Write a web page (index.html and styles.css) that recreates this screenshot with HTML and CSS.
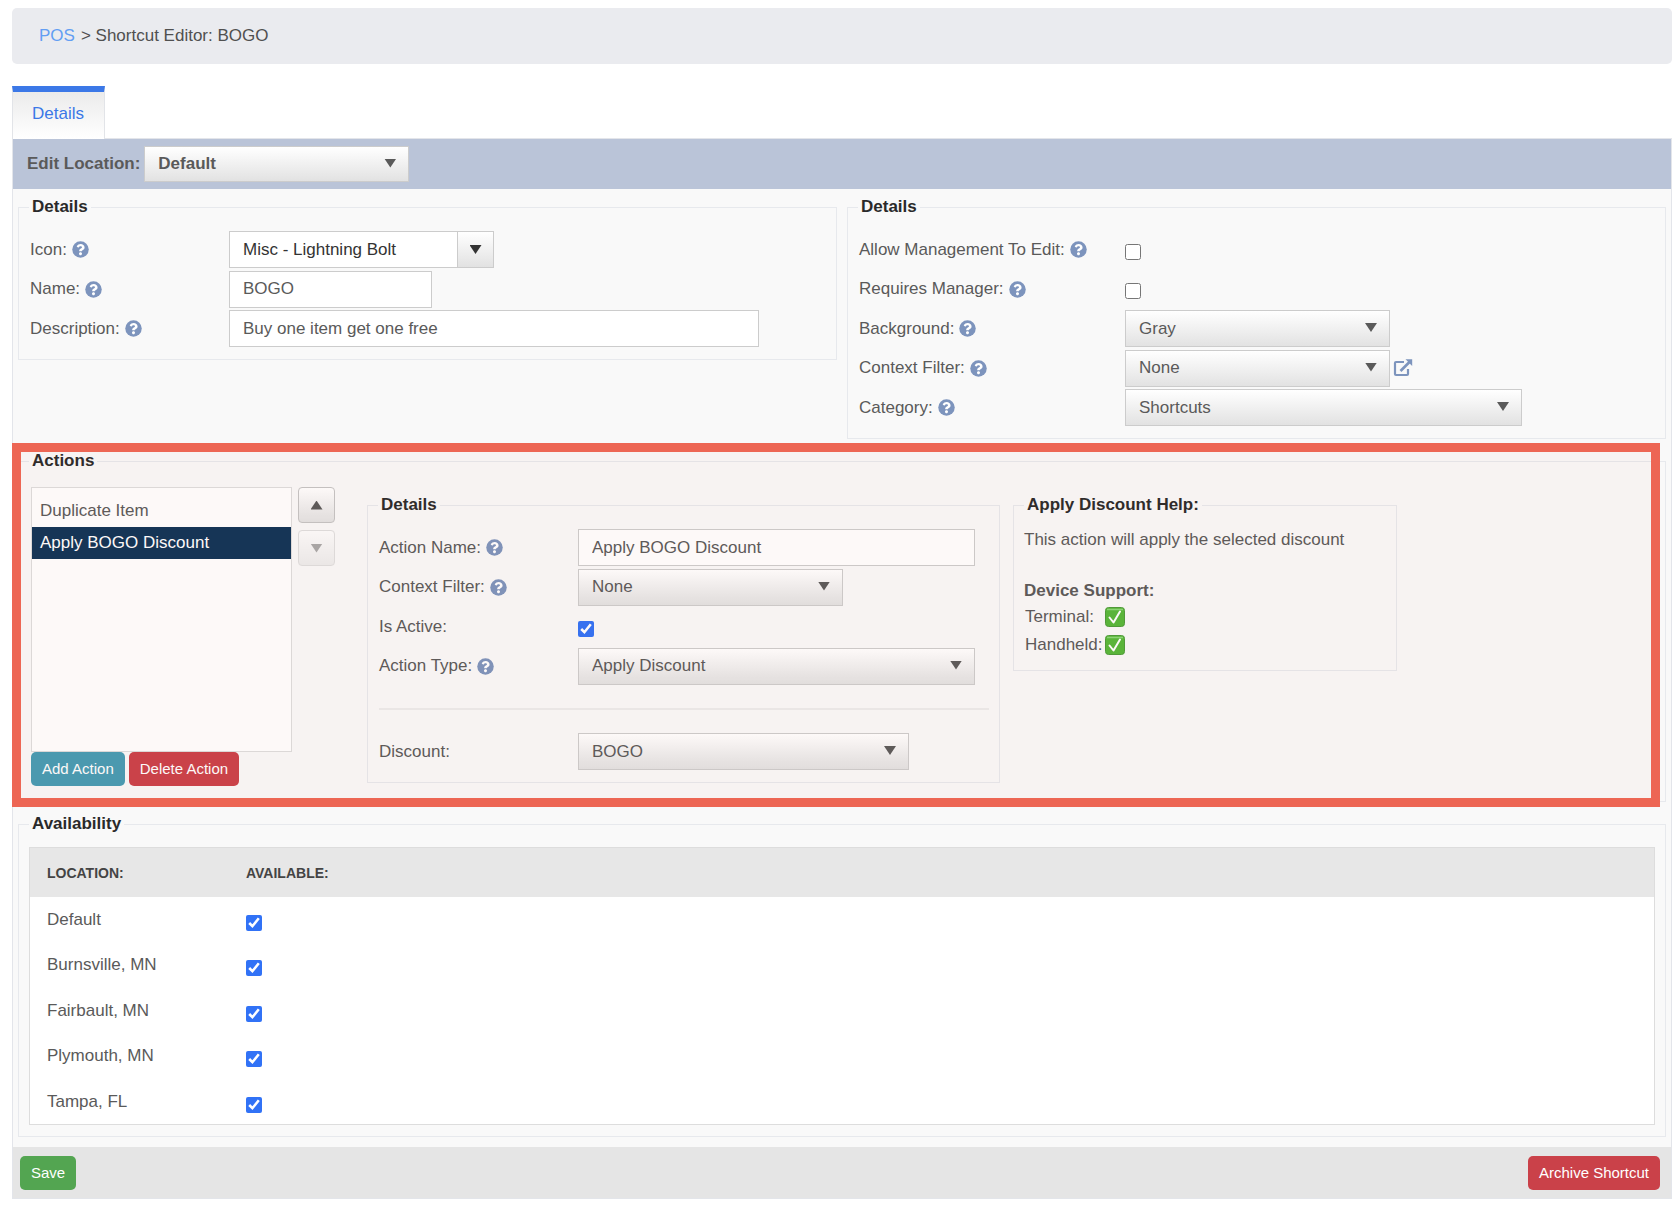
FILE: index.html
```html
<!DOCTYPE html>
<html lang="en">
<head>
  <meta charset="utf-8">
  <title>Shortcut Editor: BOGO</title>
  <meta name="viewport" content="width=device-width, initial-scale=1">
  <link rel="stylesheet" href="styles.css">
</head>
<body>
  <svg class="sprite" aria-hidden="true">
    <symbol id="help" viewBox="0 0 512 512">
      <circle cx="256" cy="256" r="248" fill="#7d94bd"/>
      <path fill="#fff" d="M262.655 90c-54.497 0-89.255 22.957-116.549 63.758-3.536 5.286-2.353 12.415 2.715 16.258l34.699 26.31c5.205 3.947 12.621 3.008 16.665-2.122 17.864-22.658 30.113-35.797 57.303-35.797 20.429 0 45.698 13.148 45.698 32.958 0 14.976-12.363 22.667-32.534 33.976C247.128 238.528 216 254.941 216 296v4c0 6.627 5.373 12 12 12h56c6.627 0 12-5.373 12-12v-1.333c0-28.462 83.186-29.647 83.186-106.667 0-58.002-60.165-102-116.531-102zM256 338c-25.365 0-46 20.635-46 46 0 25.364 20.635 46 46 46s46-20.636 46-46c0-25.364-20.635-46-46-46z"/>
    </symbol>
    <symbol id="external" viewBox="0 0 20 18">
      <path fill="none" stroke="#7d94bd" stroke-width="2.200" stroke-linejoin="round" d="M11 3H3Q2 3 2 4V15Q2 16 3 16H14Q15 16 15 15V10"/>
      <path fill="none" stroke="#7d94bd" stroke-width="2.600" d="M7.500 12L16.500 3"/>
      <path fill="#7d94bd" d="M12.500 0.300H19.200V7z"/>
    </symbol>
    <symbol id="supported" viewBox="0 0 20 20">
      <rect x=".5" y=".5" width="19" height="19" rx="3" fill="#56b83a" stroke="#4c9c3a"/>
      <path d="M2 2.500H18" stroke="#8ad877" stroke-width="1.500"/>
      <path fill="none" stroke="#fff" stroke-width="2" stroke-linejoin="round" stroke-linecap="round" d="M4.500 10.500L8.500 15.500L15 4.500"/>
    </symbol>
  </svg>

  <nav class="breadcrumb" aria-label="Breadcrumb"><a href="#pos">POS</a><span>&gt; Shortcut Editor: BOGO</span></nav>

  <nav class="tabs"><a class="tab" href="#details">Details</a></nav>

  <form class="panel" id="details">
    <div class="location-bar">
      <label for="edit-location">Edit Location:</label>
      <span class="select w-md"><select id="edit-location"><option>Default</option></select></span>
    </div>

    <div class="sections">
      <div class="columns">
        <fieldset>
          <legend>Details</legend>
          <div class="fields">
            <div class="label"><label for="icon">Icon:</label><svg class="help"><use href="#help"/></svg></div>
            <div class="combo w-md">
              <input id="icon" type="text" value="Misc - Lightning Bolt">
              <button type="button" aria-label="Choose icon"><span class="arrow"></span></button>
            </div>
            <div class="label"><label for="name">Name:</label><svg class="help"><use href="#help"/></svg></div>
            <input class="text w-sm" id="name" type="text" value="BOGO">
            <div class="label"><label for="description">Description:</label><svg class="help"><use href="#help"/></svg></div>
            <input class="text w-xl" id="description" type="text" value="Buy one item get one free">
          </div>
        </fieldset>

        <fieldset>
          <legend>Details</legend>
          <div class="fields wide-labels">
            <div class="label"><label for="allow-edit">Allow Management To Edit:</label><svg class="help"><use href="#help"/></svg></div>
            <input class="check" id="allow-edit" type="checkbox">
            <div class="label"><label for="requires-manager">Requires Manager:</label><svg class="help"><use href="#help"/></svg></div>
            <input class="check" id="requires-manager" type="checkbox">
            <div class="label"><label for="background">Background:</label><svg class="help"><use href="#help"/></svg></div>
            <span class="select w-md"><select id="background"><option>Gray</option></select></span>
            <div class="label"><label for="filter">Context Filter:</label><svg class="help"><use href="#help"/></svg></div>
            <div class="with-link">
              <span class="select w-md"><select id="filter"><option>None</option></select></span>
              <a href="#filters" aria-label="Open context filters"><svg class="external"><use href="#external"/></svg></a>
            </div>
            <div class="label"><label for="category">Category:</label><svg class="help"><use href="#help"/></svg></div>
            <span class="select w-lg"><select id="category"><option>Shortcuts</option></select></span>
          </div>
        </fieldset>
      </div>

      <div class="highlighted">
        <fieldset class="actions">
          <legend>Actions</legend>
          <div class="actions-row">
            <div class="action-list">
              <ul role="listbox" aria-label="Actions">
                <li role="option" aria-selected="false">Duplicate Item</li>
                <li role="option" aria-selected="true">Apply BOGO Discount</li>
              </ul>
              <div class="buttons">
                <button class="btn info" type="button">Add Action</button>
                <button class="btn danger" type="button">Delete Action</button>
              </div>
            </div>
            <div class="order">
              <button type="button" aria-label="Move up"><span class="arrow up"></span></button>
              <button type="button" aria-label="Move down" disabled><span class="arrow"></span></button>
            </div>

            <fieldset class="action-details">
              <legend>Details</legend>
              <div class="fields">
                <div class="label"><label for="action-name">Action Name:</label><svg class="help"><use href="#help"/></svg></div>
                <input class="text w-lg" id="action-name" type="text" value="Apply BOGO Discount">
                <div class="label"><label for="action-filter">Context Filter:</label><svg class="help"><use href="#help"/></svg></div>
                <span class="select w-md"><select id="action-filter"><option>None</option></select></span>
                <div class="label"><label for="is-active">Is Active:</label></div>
                <input class="check" id="is-active" type="checkbox" checked>
                <div class="label"><label for="action-type">Action Type:</label><svg class="help"><use href="#help"/></svg></div>
                <span class="select w-lg"><select id="action-type"><option>Apply Discount</option></select></span>
              </div>
              <hr>
              <div class="fields">
                <div class="label"><label for="discount">Discount:</label></div>
                <span class="select w-ml"><select id="discount"><option>BOGO</option></select></span>
              </div>
            </fieldset>

            <fieldset class="action-help">
              <legend>Apply Discount Help:</legend>
              <p>This action will apply the selected discount</p>
              <h3>Device Support:</h3>
              <dl>
                <dt>Terminal:</dt><dd><svg class="supported" role="img" aria-label="Supported"><use href="#supported"/></svg></dd>
                <dt>Handheld:</dt><dd><svg class="supported" role="img" aria-label="Supported"><use href="#supported"/></svg></dd>
              </dl>
            </fieldset>
          </div>
        </fieldset>
      </div>

      <fieldset>
        <legend>Availability</legend>
        <table>
          <thead>
            <tr><th scope="col">LOCATION:</th><th scope="col">AVAILABLE:</th></tr>
          </thead>
          <tbody>
            <tr><td><label for="at-default">Default</label></td><td><input class="check" id="at-default" type="checkbox" checked></td></tr>
            <tr><td><label for="at-burnsville">Burnsville, MN</label></td><td><input class="check" id="at-burnsville" type="checkbox" checked></td></tr>
            <tr><td><label for="at-fairbault">Fairbault, MN</label></td><td><input class="check" id="at-fairbault" type="checkbox" checked></td></tr>
            <tr><td><label for="at-plymouth">Plymouth, MN</label></td><td><input class="check" id="at-plymouth" type="checkbox" checked></td></tr>
            <tr><td><label for="at-tampa">Tampa, FL</label></td><td><input class="check" id="at-tampa" type="checkbox" checked></td></tr>
          </tbody>
        </table>
      </fieldset>
    </div>

    <footer>
      <button class="btn success" type="submit">Save</button>
      <button class="btn danger" type="button">Archive Shortcut</button>
    </footer>
  </form>
</body>
</html>
```

FILE: styles.css
```css
* { box-sizing: border-box; }

body {
  margin: 8px 8px 8px 12px;
  font: 17px/24px "Liberation Sans", Arial, sans-serif;
  color: #5a5a5a;
  background: #fff;
}

input, select, button { font: inherit; color: inherit; margin: 0; }

.sprite { display: none; }

.breadcrumb {
  display: flex;
  gap: 6px;
  padding: 16px 27px;
  border-radius: 5px;
  background: #eaebef;
  color: #505050;
}
.breadcrumb a { color: #629ef3; text-decoration: none; }

/* Tabs */
.tabs { display: flex; margin-top: 22px; }
.tab {
  position: relative;
  margin-bottom: -1px;
  padding: 10px 20px 13px 19px;
  border: 1px solid #e2e4e8;
  border-top: 6px solid #3b78e7;
  border-bottom: 0;
  background: linear-gradient(#ebebeb, #fff);
  color: #3b78e7;
  text-decoration: none;
}

.panel { border: 1px solid #e3e5ea; background: #f9f9f9; }

.location-bar {
  display: flex;
  align-items: center;
  gap: 4px;
  padding: 7px 14px;
  background: #bac4d8;
  font-weight: bold;
}

.sections {
  display: flex;
  flex-direction: column;
  gap: 10px;
  padding: 6px 5px 10px;
}
.columns {
  display: grid;
  grid-template-columns: 1fr 1fr;
  align-items: start;
  gap: 10px;
}

fieldset {
  min-width: 0;
  margin: 0;
  padding: 11px 10px;
  border: 1px solid #e7e9ed;
}
legend { padding: 0 3px; font-weight: bold; color: #2a2a2a; }

/* Label and control pairs */
.fields {
  display: grid;
  grid-template-columns: 199px 1fr;
  grid-auto-rows: 39px 40px;
  align-items: center;
  padding: 0 1px;
}
.wide-labels { grid-template-columns: 266px 1fr; }
.label { display: flex; align-items: center; gap: 5px; }
.help { width: 17px; height: 17px; }

.w-sm { width: 203px; }
.w-md { width: 265px; }
.w-ml { width: 331px; }
.w-lg { width: 397px; }
.w-xl { width: 530px; }

.text {
  height: 37px;
  padding: 0 13px;
  border: 1px solid #ccc;
  background: #fff;
}

.select { display: inline-grid; align-items: center; }
.select select {
  grid-area: 1 / 1;
  width: 100%;
  height: 37px;
  padding: 0 36px 0 13px;
  border: 1px solid #ccc;
  border-radius: 0;
  appearance: none;
  background: linear-gradient(#fff, #e2e2e2);
}
.location-bar select { height: 36px; font-weight: bold; }
.select::after {
  content: "";
  grid-area: 1 / 1;
  justify-self: end;
  width: 12px;
  height: 9px;
  margin: 0 13px 2px 0;
  background: #5a5a5a;
  clip-path: polygon(0 0, 100% 0, 50% 100%);
  pointer-events: none;
}

.arrow {
  width: 12px;
  height: 9px;
  background: #5a5a5a;
  clip-path: polygon(0 0, 100% 0, 50% 100%);
}
.arrow.up { clip-path: polygon(50% 0, 100% 100%, 0 100%); }

.combo { display: flex; height: 37px; border: 1px solid #ccc; background: #fff; color: #333; }
.combo input { flex: 1; min-width: 0; padding: 0 13px; border: 0; background: none; }
.combo button {
  display: flex;
  align-items: center;
  justify-content: center;
  width: 36px;
  padding: 0;
  border: 0;
  border-left: 1px solid #ccc;
  background: linear-gradient(#fff, #e2e2e2);
}
.combo .arrow { background: #333; }

.check { width: 16px; height: 16px; margin-top: 4px; accent-color: #3172f6; }

.with-link { display: flex; align-items: center; gap: 3px; }
.with-link a { display: flex; }
.external { width: 20px; height: 18px; }

/* Actions, with the highlight frame laid over them */
.highlighted { position: relative; }
.highlighted::after {
  content: "";
  position: absolute;
  inset: -6px 6px -5px -6px;
  border: 9px solid #ed6654;
  background: rgba(192, 92, 67, .04);
  pointer-events: none;
}
.actions { padding: 14px 10px 15px; }
.actions-row { display: flex; align-items: flex-start; padding: 0 2px; }
.action-list { width: 261px; }
.action-list ul {
  height: 265px;
  margin: 0;
  padding: 7px 0;
  border: 1px solid #ddd;
  background: #fff;
  list-style: none;
}
.action-list li { padding: 4px 8px; }
.action-list [aria-selected="true"] { background: #0f3357; color: #fff; }
.buttons { display: flex; gap: 4px; }

.order { display: flex; flex-direction: column; gap: 7px; margin: 0 32px 0 6px; }
.order button {
  display: flex;
  align-items: center;
  justify-content: center;
  width: 37px;
  height: 36px;
  padding: 0;
  border: 1px solid #c4c4c4;
  border-radius: 4px;
  background: linear-gradient(#fff, #e2e2e2);
}
.order button:disabled { opacity: .5; }

.action-details { flex: 0 1 633px; margin-top: 6px; }
.action-details hr { height: 2px; margin: 22px 0 22px 1px; border: 0; background: #ececec; }

.action-help { flex: 0 1 384px; margin: 6px 0 0 13px; }
.action-help p { margin: 0 0 27px; }
.action-help h3 { margin: 0; font-size: 17px; line-height: 24px; }
.action-help dl {
  display: grid;
  grid-template-columns: 80px 1fr;
  grid-auto-rows: 28px;
  align-items: center;
  margin: 0;
  padding-left: 1px;
}
.action-help dd { display: flex; margin: 0; }
.supported { width: 20px; height: 20px; }

.btn {
  height: 34px;
  padding: 0 11px;
  border: 0;
  border-radius: 5px;
  color: #fff;
  font-size: 15px;
}
.info { background: #469cb4; }
.danger { background: #ca4149; }
.success { background: #53a551; }

/* Availability */
table {
  width: 100%;
  border: 1px solid #ddd;
  border-spacing: 0;
  background: #fff;
}
th, td { padding: 0 17px; text-align: left; }
th { height: 49px; background: #e7e7e7; color: #444; font-size: 14px; }
th:first-child { width: 199px; }
td { height: 45px; }
tr:nth-child(even) td { height: 46px; }
td .check { display: block; margin-top: 6px; }

footer {
  display: flex;
  justify-content: space-between;
  padding: 9px 11px 8px 7px;
  background: #e5e5e5;
}
```
